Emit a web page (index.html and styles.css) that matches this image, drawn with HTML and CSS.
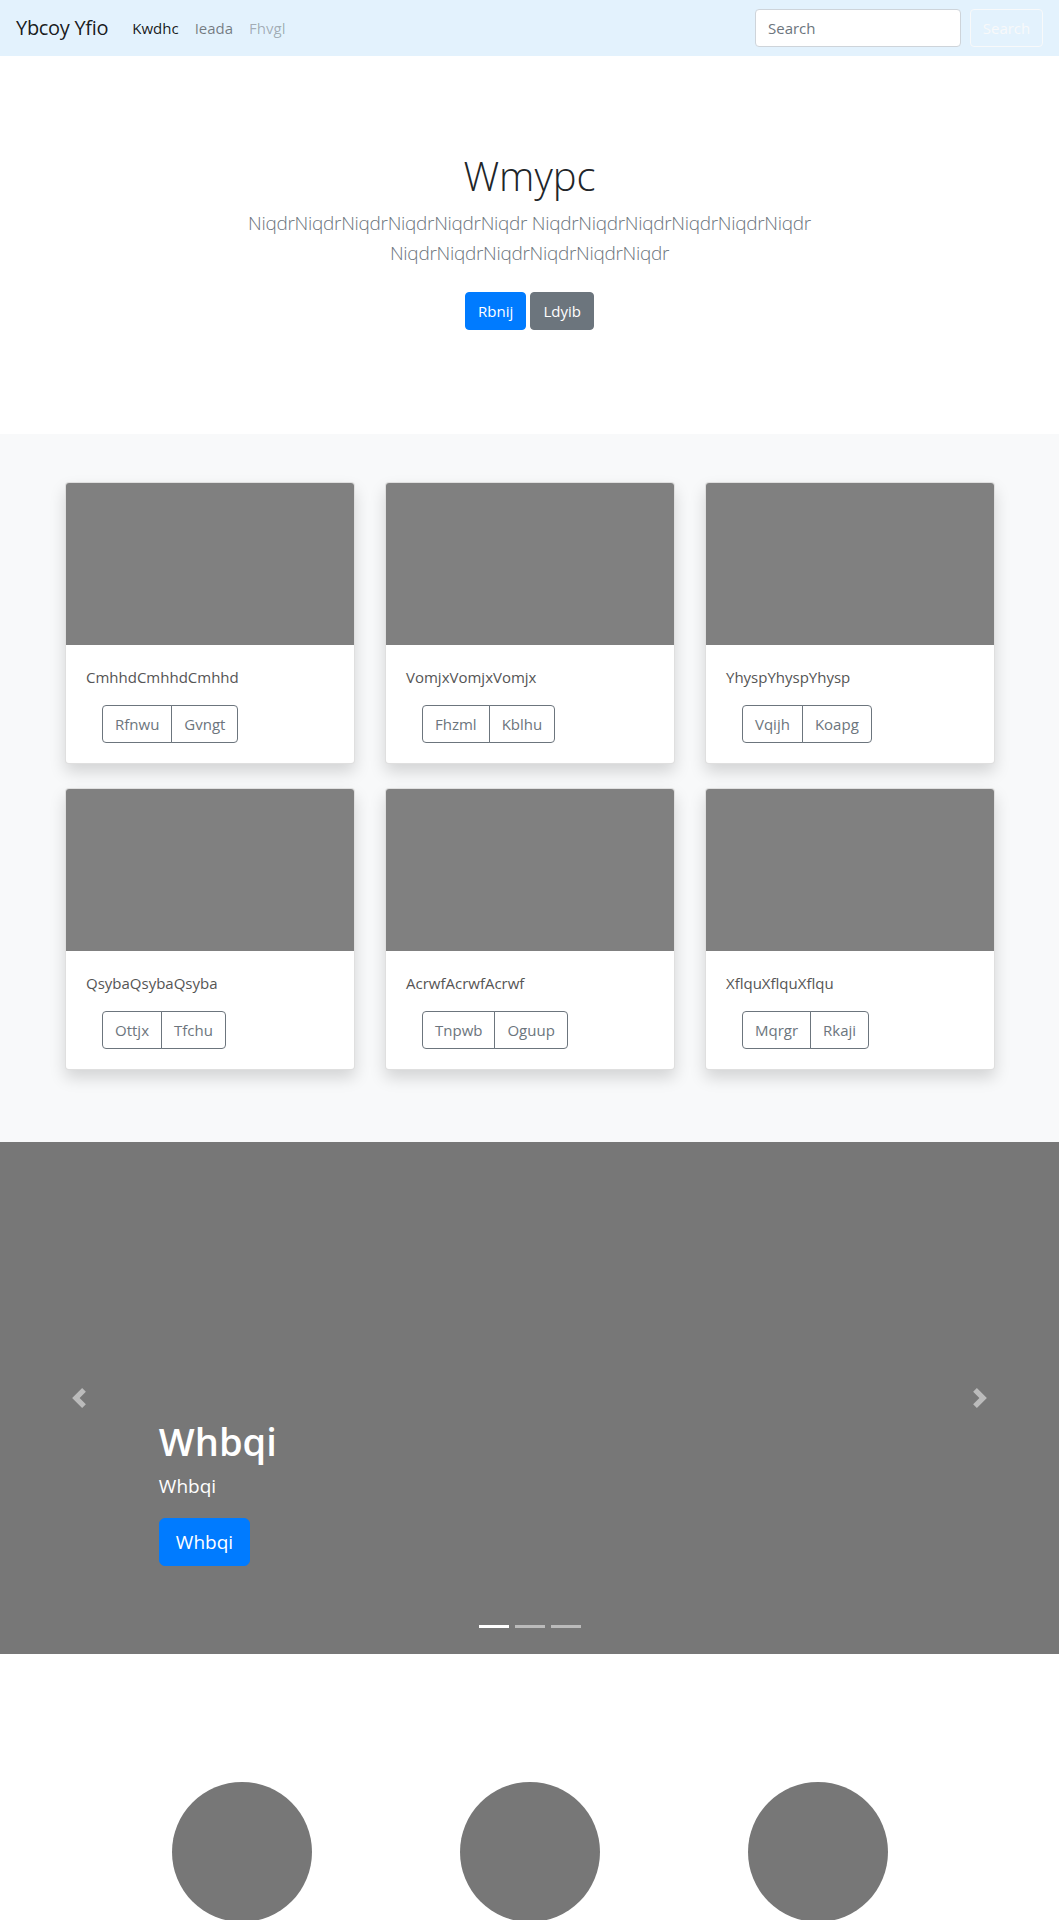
FILE: index.html
```html
<!DOCTYPE html>
<html lang="en">
<head>
  <meta charset="UTF-8">
  <meta name="viewport" content="width=device-width, initial-scale=1.0">
  <title>Ybcoy Yfio</title>
  <link rel="stylesheet" href="styles.css">
</head>
<body>
  <nav class="navbar">
    <a class="brand" href="#">Ybcoy Yfio</a>
    <ul class="nav-links">
      <li><a class="active" href="#">Kwdhc</a></li>
      <li><a href="#">Ieada</a></li>
      <li><a class="disabled" href="#">Fhvgl</a></li>
    </ul>
    <form class="search">
      <input type="search" placeholder="Search">
      <button type="button" class="btn-outline-light">Search</button>
    </form>
  </nav>

  <section class="hero">
    <div class="hero-inner">
      <h1>Wmypc</h1>
      <p class="lead">NiqdrNiqdrNiqdrNiqdrNiqdrNiqdr NiqdrNiqdrNiqdrNiqdrNiqdrNiqdr NiqdrNiqdrNiqdrNiqdrNiqdrNiqdr</p>
      <p class="hero-btns">
        <a href="#" class="btn btn-primary">Rbnij</a>
        <a href="#" class="btn btn-secondary">Ldyib</a>
      </p>
    </div>
  </section>

  <div class="album">
    <div class="grid">
      <div class="card">
        <div class="thumb"></div>
        <div class="card-body">
          <p>CmhhdCmhhdCmhhd</p>
          <div class="btn-group"><button>Rfnwu</button><button>Gvngt</button></div>
        </div>
      </div>
      <div class="card">
        <div class="thumb"></div>
        <div class="card-body">
          <p>VomjxVomjxVomjx</p>
          <div class="btn-group"><button>Fhzml</button><button>Kblhu</button></div>
        </div>
      </div>
      <div class="card">
        <div class="thumb"></div>
        <div class="card-body">
          <p>YhyspYhyspYhysp</p>
          <div class="btn-group"><button>Vqijh</button><button>Koapg</button></div>
        </div>
      </div>
      <div class="card">
        <div class="thumb"></div>
        <div class="card-body">
          <p>QsybaQsybaQsyba</p>
          <div class="btn-group"><button>Ottjx</button><button>Tfchu</button></div>
        </div>
      </div>
      <div class="card">
        <div class="thumb"></div>
        <div class="card-body">
          <p>AcrwfAcrwfAcrwf</p>
          <div class="btn-group"><button>Tnpwb</button><button>Oguup</button></div>
        </div>
      </div>
      <div class="card">
        <div class="thumb"></div>
        <div class="card-body">
          <p>XflquXflquXflqu</p>
          <div class="btn-group"><button>Mqrgr</button><button>Rkaji</button></div>
        </div>
      </div>
    </div>
  </div>

  <div class="carousel">
    <a class="ctrl ctrl-prev" href="#">
      <svg width="20" height="20" viewBox="0 0 8 8" fill="#fff"><path d="M5.25 0l-4 4 4 4 1.5-1.5-2.5-2.5 2.5-2.5-1.5-1.5z"/></svg>
    </a>
    <div class="caption">
      <h1>Whbqi</h1>
      <p>Whbqi</p>
      <p><a href="#" class="btn btn-lg btn-primary">Whbqi</a></p>
    </div>
    <a class="ctrl ctrl-next" href="#">
      <svg width="20" height="20" viewBox="0 0 8 8" fill="#fff"><path d="M2.75 0l-1.5 1.5 2.5 2.5-2.5 2.5 1.5 1.5 4-4-4-4z"/></svg>
    </a>
    <ol class="indicators">
      <li class="active"></li>
      <li></li>
      <li></li>
    </ol>
  </div>

  <div class="marketing">
    <div class="circle"></div>
    <div class="circle"></div>
    <div class="circle"></div>
  </div>
</body>
</html>
```

FILE: styles.css
```css
body {
  margin: 0;
  font-family: "Open Sans", "Noto Sans", sans-serif;
  font-size: 16px;
  line-height: 1.5;
  color: #212529;
  background: #fff;
}

a {
  text-decoration: none;
}

/* navbar */
.navbar {
  display: flex;
  align-items: center;
  height: 56px;
  box-sizing: border-box;
  padding: 8px 16px;
  background-color: #e3f2fd;
}

.brand {
  font-size: 20px;
  color: rgba(0,0,0,0.9);
  margin-right: 16px;
  letter-spacing: -0.3px;
}

.nav-links {
  display: flex;
  list-style: none;
  margin: 0;
  padding: 0;
  flex: 1;
}

.nav-links a {
  display: block;
  padding: 8px;
  font-size: 15px;
  color: rgba(0,0,0,0.5);
}

.nav-links a.active {
  color: rgba(0,0,0,0.9);
}

.nav-links a.disabled {
  color: rgba(0,0,0,0.3);
}

.search {
  display: flex;
  align-items: center;
  gap: 9px;
}

.search input {
  width: 206px;
  height: 38px;
  box-sizing: border-box;
  padding: 6px 12px;
  font-family: inherit;
  font-size: 15px;
  color: #495057;
  background: #fff;
  border: 1px solid #ced4da;
  border-radius: 4px;
}

.search input::placeholder {
  color: #6c757d;
}

.btn-outline-light {
  height: 38px;
  width: 73px;
  font-family: inherit;
  font-size: 15px;
  color: #f8f9fa;
  background: transparent;
  border: 1px solid #f8f9fa;
  border-radius: 4px;
}

/* hero */
.hero {
  padding: 96px 0;
  text-align: center;
}

.hero-inner {
  max-width: 640px;
  margin: 0 auto;
}

.hero h1 {
  margin: 0 0 8px;
  font-size: 40px;
  font-weight: 300;
  line-height: 48px;
  color: #212529;
}

.lead {
  margin: 0 0 16px;
  font-size: 19px;
  font-weight: 300;
  line-height: 30px;
  color: #6c757d;
  letter-spacing: -0.3px;
}

.hero-btns {
  margin: 0;
}

.btn {
  display: inline-block;
  margin: 8px 0;
  padding: 6px 12px;
  font-size: 15px;
  line-height: 24px;
  border: 1px solid transparent;
  border-radius: 4px;
  color: #fff;
}

.btn-primary {
  background-color: #007bff;
  border-color: #007bff;
}

.btn-secondary {
  background-color: #6c757d;
  border-color: #6c757d;
}

/* album */
.album {
  background-color: #f8f9fa;
  padding: 48px 0 72px;
}

.grid {
  width: 930px;
  margin: 0 auto;
  display: grid;
  grid-template-columns: repeat(3, 290px);
  column-gap: 30px;
  row-gap: 24px;
  padding-left: 1px;
}

.card {
  background: #fff;
  border: 1px solid rgba(0,0,0,0.125);
  border-radius: 4px;
  overflow: hidden;
  box-shadow: 0 .5rem 1rem rgba(0,0,0,0.15);
  box-sizing: border-box;
}

.thumb {
  height: 162px;
  background-color: #808080;
}

.card-body {
  padding: 20px;
}

.card-body p {
  margin: 0 0 16px;
  font-size: 15px;
  line-height: 24px;
  color: #555;
}

.btn-group {
  display: inline-flex;
  margin-left: 16px;
}

.btn-group button {
  height: 38px;
  padding: 6px 12px;
  font-family: inherit;
  font-size: 15px;
  color: #6c757d;
  background: transparent;
  border: 1px solid #6c757d;
}

.btn-group button:first-child {
  border-radius: 4px 0 0 4px;
}

.btn-group button:last-child {
  border-radius: 0 4px 4px 0;
  margin-left: -1px;
}

/* carousel */
.carousel {
  position: relative;
  height: 512px;
  background-color: #777;
}

.ctrl {
  position: absolute;
  top: 0;
  bottom: 0;
  width: 15%;
  display: flex;
  align-items: center;
  justify-content: center;
  opacity: 0.5;
}

.ctrl-prev {
  left: 0;
}

.ctrl-next {
  right: 0;
}

.caption {
  position: absolute;
  left: 15%;
  right: 15%;
  bottom: 68px;
  padding: 20px 0;
  color: #fff;
}

.caption h1 {
  margin: 0 0 8px;
  font-size: 38px;
  font-weight: 600;
  line-height: 46px;
}

.caption p {
  margin: 0 0 18px;
  font-size: 19px;
  line-height: 28px;
}

.caption p:last-child {
  margin: 0;
}

.btn-lg {
  margin: 0;
  padding: 8px 16px;
  font-size: 19px;
  line-height: 30px;
  border-radius: 6px;
}

.indicators {
  position: absolute;
  left: 0;
  right: 0;
  bottom: 26px;
  display: flex;
  justify-content: center;
  gap: 6px;
  list-style: none;
  margin: 0;
  padding: 0;
}

.indicators li {
  width: 30px;
  height: 3px;
  background: #fff;
  opacity: 0.5;
}

.indicators li.active {
  opacity: 1;
}

/* marketing */
.marketing {
  width: 864px;
  margin: 0 auto;
  padding-top: 128px;
  display: grid;
  grid-template-columns: repeat(3, 1fr);
  justify-items: center;
}

.circle {
  width: 140px;
  height: 140px;
  border-radius: 50%;
  background-color: #777;
}
```
